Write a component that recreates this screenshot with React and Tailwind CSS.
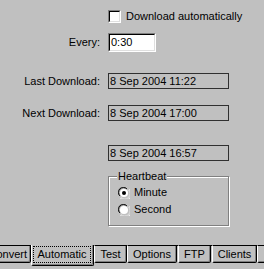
import React from "react";

const font = { fontFamily: '"Liberation Sans", Arial, sans-serif' };

function Sunken({ className = "", children }) {
  return (
    <div className={`border border-t-[#808080] border-l-[#808080] border-b-white border-r-white ${className}`}>
      <div className="h-full w-full border border-t-black border-l-black border-b-[#dfdfdf] border-r-[#dfdfdf] bg-white">
        {children}
      </div>
    </div>
  );
}

function Radio({ checked }) {
  return (
    <svg width="12" height="12" viewBox="0 0 12 12" className="shrink-0">
      <path d="M1 8 A5 5 0 0 1 8 1" fill="none" stroke="#808080" strokeWidth="1" />
      <path d="M2 9 A4.5 4.5 0 0 1 9 2" fill="none" stroke="#000" strokeWidth="1" />
      <circle cx="6" cy="6" r="4" fill="#fff" />
      <path d="M3 10.5 A5 5 0 0 0 10.5 3" fill="none" stroke="#dfdfdf" strokeWidth="1" />
      <path d="M2.5 11.5 A6 6 0 0 0 11.5 2.5" fill="none" stroke="#fff" strokeWidth="1" />
      {checked && <circle cx="6" cy="6" r="2" fill="#000" />}
    </svg>
  );
}

function Field({ children }) {
  return (
    <div className="h-[16px] w-[121px] border border-[#303030] bg-[#c0c0c0] pl-[1px] text-[11px] leading-[14px]">
      {children}
    </div>
  );
}

function Tab({ label, w, first }) {
  return (
    <div
      className={`flex h-[18px] shrink-0 items-center justify-center rounded-b-[2px] border-t border-b border-r border-l border-t-black border-b-black border-r-black border-l-white text-[11px] leading-none shadow-[inset_-1px_-1px_0_#808080] ${first ? "justify-end pr-[3px]" : ""}`}
      style={{ width: w }}
    >
      {label}
    </div>
  );
}

export default function App() {
  return (
    <div className="h-[269px] w-[264px] overflow-hidden bg-[#c0c0c0] text-black" style={font}>
      <div className="flex h-[245px] flex-col text-[11px] leading-[13px]">
        {/* Download automatically */}
        <div className="mt-[10px] flex items-center pl-[108px]">
          <Sunken className="h-[13px] w-[13px]" />
          <span className="ml-[5px]">Download automatically</span>
        </div>
        {/* Every */}
        <div className="mt-[10px] flex items-center">
          <div className="w-[100px] text-right">Every:</div>
          <Sunken className="ml-[8px] h-[19px] w-[48px]">
            <div className="pl-[1px] leading-[15px]">0:30</div>
          </Sunken>
        </div>
        {/* Last download */}
        <div className="mt-[21px] flex items-center">
          <div className="w-[100px] text-right">Last Download:</div>
          <div className="ml-[8px]">
            <Field>8 Sep 2004 11:22</Field>
          </div>
        </div>
        {/* Next download */}
        <div className="mt-[16px] flex items-center">
          <div className="w-[100px] text-right">Next Download:</div>
          <div className="ml-[8px]">
            <Field>8 Sep 2004 17:00</Field>
          </div>
        </div>
        {/* Heartbeat time */}
        <div className="mt-[24px] flex items-center pl-[108px]">
          <Field>8 Sep 2004 16:57</Field>
        </div>
        {/* Heartbeat group */}
        <div className="ml-[108px] mt-[15px] h-[50px] w-[121px] relative border border-[#808080] shadow-[1px_1px_0_#fff,inset_1px_1px_0_#fff]">
          <span className="absolute left-[8px] top-[-7px] bg-[#c0c0c0] px-[1px]">Heartbeat</span>
          <div className="flex flex-col gap-[4px] pl-[9px] pt-[9px]">
            <div className="flex items-center">
              <Radio checked />
              <span className="ml-[4px]">Minute</span>
            </div>
            <div className="flex items-center">
              <Radio />
              <span className="ml-[4px]">Second</span>
            </div>
          </div>
        </div>
      </div>
      {/* Tabs */}
      <div className="flex items-start">
        <div className="ml-[-22px] flex">
          <Tab label="Convert" w={53} first />
        </div>
        <div className="flex h-[21px] w-[63px] shrink-0 rounded-b-[2px] border-l border-r border-b border-l-white border-r-black border-b-black shadow-[inset_-1px_-1px_0_#808080]">
          <div className="m-[1px] mb-[2px] mr-[2px] flex flex-1 items-center justify-center border border-dotted border-black text-[11px] leading-none">
            Automatic
          </div>
        </div>
        <Tab label="Test" w={33} />
        <Tab label="Options" w={50} />
        <div className="w-[1px] shrink-0 h-[18px] border-t border-t-black" />
        <Tab label="FTP" w={33} />
        <div className="w-[1px] shrink-0 h-[18px] border-t border-t-black" />
        <Tab label="Clients" w={45} />
        <Tab label="" w={20} />
      </div>
    </div>
  );
}
